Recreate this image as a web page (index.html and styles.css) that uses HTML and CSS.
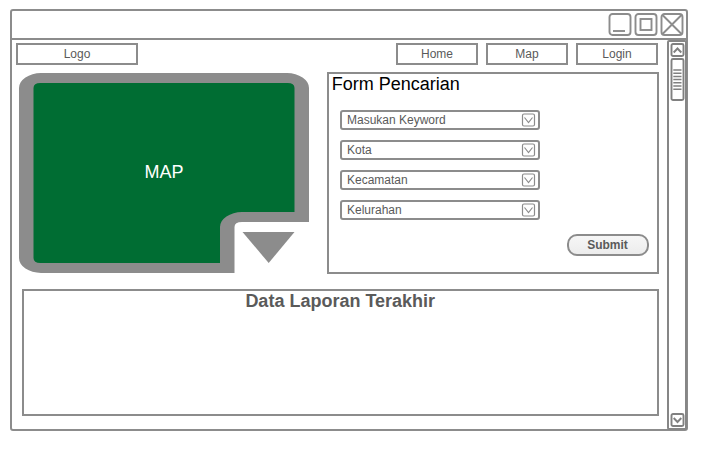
FILE: index.html
```html
<!DOCTYPE html>
<html lang="id">
<head>
<meta charset="utf-8">
<title>Form Pencarian</title>
<link rel="stylesheet" href="styles.css">
</head>
<body>
<div class="window">
  <header class="titlebar">
    <svg class="controls" width="76" height="24" viewBox="0 0 76 24">
      <rect x="1.5" y="2" width="21" height="21" rx="3"/>
      <path d="M5 19H17"/>
      <rect x="27.5" y="2" width="21" height="21" rx="3"/>
      <rect x="32.5" y="7" width="11" height="11"/>
      <rect x="53.5" y="2" width="21" height="21" rx="3"/>
      <path d="M54.500 3L73.500 22M73.500 3L54.500 22"/>
    </svg>
  </header>
  <div class="body">
    <main class="content">
      <nav class="nav">
        <a class="box logo">Logo</a>
        <a class="box link">Home</a>
        <a class="box link">Map</a>
        <a class="box link">Login</a>
      </nav>
      <div class="top">
        <div class="map">
          <svg width="290" height="200" viewBox="0 0 290 200">
            <path fill="#8c8c8c" d="M22 0H268A22 15 0 0 1 290 15V149H223Q215.500 149 215.500 154V200H22A22 15 0 0 1 0 185V15A22 15 0 0 1 22 0Z"/>
            <path fill="#006d33" d="M21.500 10H268.500Q275.500 10 275.500 15V139H223A22 15 0 0 0 201 154V190H21.500Q14.500 190 14.500 185V15Q14.500 10 21.500 10Z"/>
            <path fill="#8c8c8c" d="M223.500 159H275.500L249.700 190Z"/>
          </svg>
          <span class="map-label">MAP</span>
        </div>
        <section class="form">
          <h2 class="form-title">Form Pencarian</h2>
          <div class="fields">
            <div class="select">Masukan Keyword<svg width="15" height="14" viewBox="0 0 15 14"><rect x="1.500" y="1" width="12" height="12" rx="1.500"/><path d="M3.500 4.500L7.500 9.500L11.500 4.500"/></svg></div>
            <div class="select">Kota<svg width="15" height="14" viewBox="0 0 15 14"><rect x="1.500" y="1" width="12" height="12" rx="1.500"/><path d="M3.500 4.500L7.500 9.500L11.500 4.500"/></svg></div>
            <div class="select">Kecamatan<svg width="15" height="14" viewBox="0 0 15 14"><rect x="1.500" y="1" width="12" height="12" rx="1.500"/><path d="M3.500 4.500L7.500 9.500L11.500 4.500"/></svg></div>
            <div class="select">Kelurahan<svg width="15" height="14" viewBox="0 0 15 14"><rect x="1.500" y="1" width="12" height="12" rx="1.500"/><path d="M3.500 4.500L7.500 9.500L11.500 4.500"/></svg></div>
          </div>
          <button class="submit">Submit</button>
        </section>
      </div>
      <section class="report"><h2 class="report-title">Data Laporan Terakhir</h2></section>
    </main>
    <aside class="scrollbar">
      <svg width="15" height="59" viewBox="0 0 15 59">
        <rect x="1.500" y="1" width="12" height="12" rx="1.500"/>
        <path d="M3.700 9.500L7.500 5.500L11.300 9.500"/>
        <rect x="1.500" y="16" width="12" height="41" rx="1.500"/>
        <path class="grip" d="M3.300 27H11.500M3.300 30.200H11.500M3.300 33.400H11.500M3.300 36.600H11.500M3.300 39.800H11.500M3.300 43H11.500M3.300 46.200H11.500"/>
      </svg>
      <svg width="15" height="14" viewBox="0 0 15 14">
        <rect x="1.500" y="1" width="12" height="12" rx="1.500"/>
        <path d="M3.700 5L7.500 9L11.300 5"/>
      </svg>
    </aside>
  </div>
</div>
</body>
</html>
```
FILE: styles.css
```css
* { box-sizing: border-box; }
body {
  margin: 0;
  padding: 9px 0 0 10px;
  background: #fff;
  color: #5a5a5a;
  font: 12px/16px "Liberation Sans", Arial, sans-serif;
}
svg { display: block; flex: none; fill: none; stroke: #8c8c8c; stroke-width: 2; }
.window {
  width: 678px;
  height: 422px;
  border: 2px solid #8c8c8c;
  border-radius: 3px;
}
.titlebar {
  display: flex;
  justify-content: flex-end;
  height: 29px;
  padding: 1px 2px 0 0;
  border-bottom: 2px solid #8c8c8c;
}
.controls { stroke-width: 1.900; }
.body { display: flex; height: 389px; }
.content { width: 655px; padding: 3px 8px 0 4px; }
.nav { display: flex; gap: 8px; }
.box {
  width: 82px;
  height: 22px;
  border: 2px solid #8c8c8c;
  text-align: center;
  line-height: 18px;
}
.logo { width: 122px; margin-right: 250px; }
.top { display: flex; padding: 7px 0 0 3px; }
.map { position: relative; width: 290px; height: 200px; margin-top: 1px; }
.map svg { stroke: none; }
.map-label {
  position: absolute;
  inset: 0;
  color: #fff;
  font-size: 18px;
  line-height: 198px;
  text-align: center;
}
.form {
  flex: none;
  width: 332px;
  height: 202px;
  margin-left: 18px;
  border: 2px solid #8c8c8c;
}
h2 { margin: 0; font-size: 18px; line-height: 20px; }
.form-title { padding-left: 2.700px; color: #000; font-weight: 400; }
.fields { display: grid; gap: 10px; padding: 16px 0 0 11px; }
.select {
  display: flex;
  align-items: center;
  justify-content: space-between;
  width: 199.500px;
  height: 20px;
  padding: 0 1.500px 0 5px;
  border: 2px solid #8c8c8c;
  border-radius: 3px;
}
.select svg { stroke-width: 1.200; }
.submit {
  display: block;
  width: 82px;
  height: 22px;
  margin: 14px 0 0 238px;
  padding: 0 1px 0 0;
  border: 2px solid #8c8c8c;
  border-radius: 10px;
  background: linear-gradient(#f6f6f6, #ececec);
  color: #5a5a5a;
  font: bold 12px/18px "Liberation Sans", Arial, sans-serif;
}
.report {
  width: 637px;
  height: 127px;
  margin: 15px 0 0 6px;
  border: 2px solid #8c8c8c;
  text-align: center;
}
.report-title { padding-right: 0.500px; }
.scrollbar {
  display: flex;
  flex: none;
  flex-direction: column;
  justify-content: space-between;
  width: 20px;
  height: 390px;
  padding: 1px 0 1px 1px;
  border: 2px solid #868686;
  border-radius: 2px;
}
.scrollbar svg { stroke: #808080; stroke-width: 1.900; }
.scrollbar .grip { stroke-width: 1.500; }
```
